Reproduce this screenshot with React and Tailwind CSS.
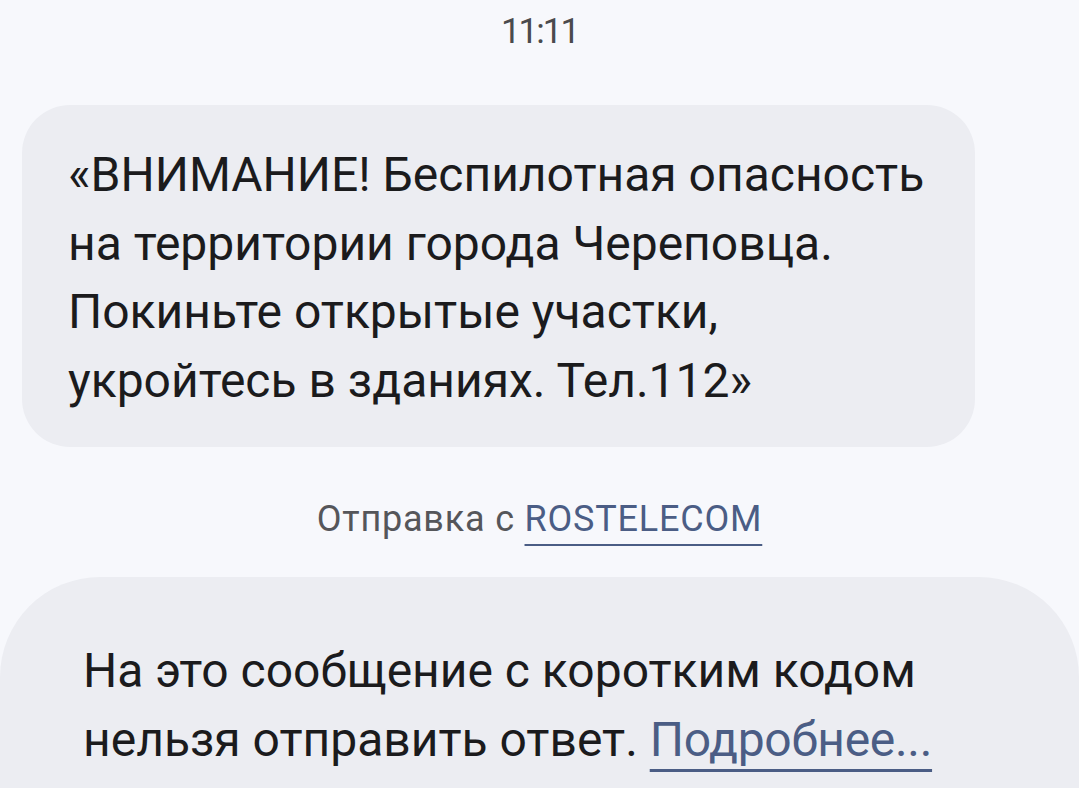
export default function App() {
  return (
    <div
      className="h-[788px] overflow-hidden bg-[#f7f8fc] flex flex-col text-[#1b1b1d]"
      style={{ fontFamily: "Roboto, 'Noto Sans', sans-serif" }}
    >
      {/* timestamp */}
      <div className="pt-[12px] text-center text-[35px] leading-[40px] text-[#4a4a4d] tracking-[-2px]">
        11:11
      </div>

      {/* incoming message */}
      <div className="mt-[53px] mx-[22px] w-[953px] rounded-[48px] bg-[#ecedf2] pl-[46px] pr-[20px] pt-[36px] pb-[32px]">
        <p className="text-[48px] leading-[68.5px]">
          «ВНИМАНИЕ! Беспилотная опасность
          <br />
          на территории города Череповца.
          <br />
          Покиньте открытые участки,
          <br />
          укройтесь в зданиях. Тел.112»
        </p>
      </div>

      {/* sender */}
      <div className="mt-[50px] text-center text-[36px] leading-[44px] tracking-[0.8px] text-[#55565a]">
        Отправка с{" "}
        <span className="text-[#4b5d85] underline decoration-2 underline-offset-[13px]">
          ROSTELECOM
        </span>
      </div>

      {/* short code notice */}
      <div className="mt-[36px] flex-1 rounded-t-[100px] bg-[#ecedf2] pl-[83px] pr-[40px] pt-[60px]">
        <p className="text-[48px] leading-[68.5px]">
          На это сообщение с коротким кодом
          <br />
          нельзя отправить ответ.{" "}
          <span className="text-[#4b5d85] underline decoration-[3px] underline-offset-[13px] tracking-[-0.3px]">
            Подробнее...
          </span>
        </p>
      </div>
    </div>
  );
}
